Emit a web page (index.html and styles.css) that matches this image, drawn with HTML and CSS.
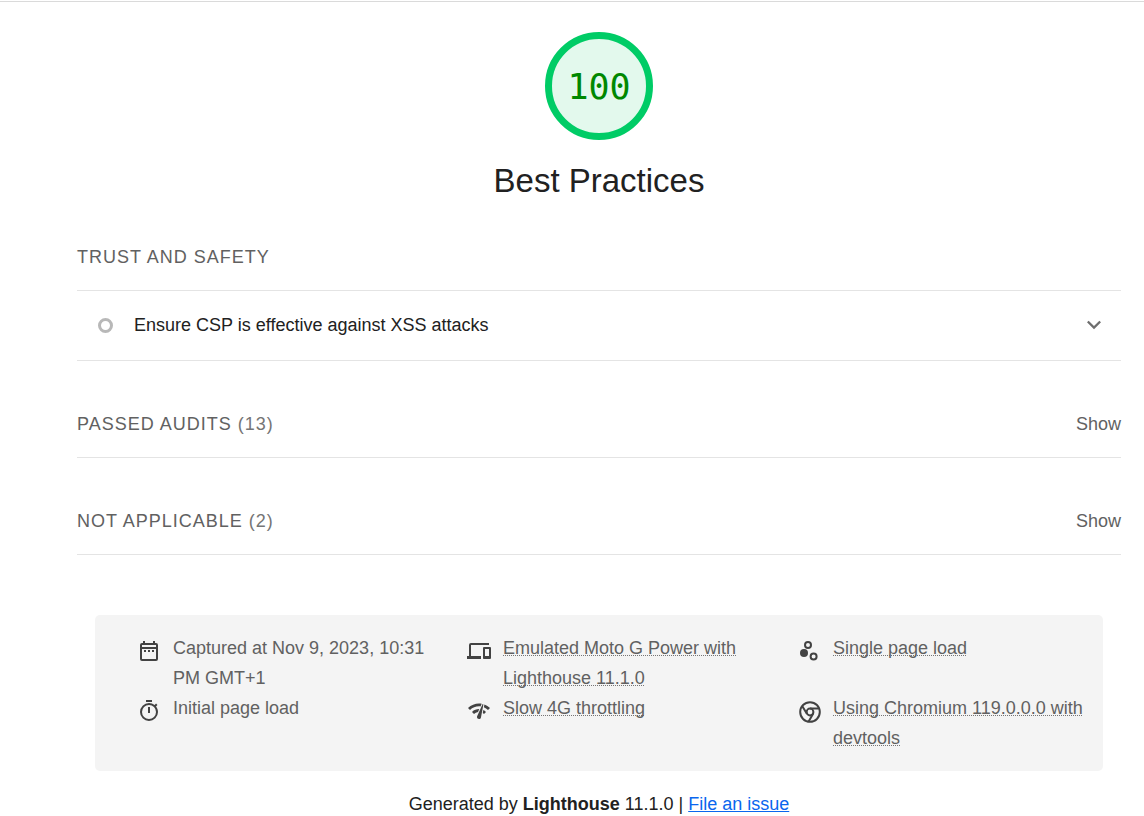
FILE: index.html
```html
<!DOCTYPE html>
<html lang="en">
<head>
<meta charset="utf-8">
<meta name="viewport" content="width=device-width, initial-scale=1">
<title>Lighthouse Report</title>
<link rel="stylesheet" href="styles.css">
</head>
<body>
<main class="report">
  <header class="category">
    <div class="gauge">100</div>
    <h1 class="category-title">Best Practices</h1>
  </header>

  <section class="group">
    <h2 class="group-head">Trust and Safety</h2>
    <details class="audit">
      <summary class="audit-row">
        <span class="audit-mark"></span>
        <span class="audit-title">Ensure CSP is effective against XSS attacks</span>
        <svg class="chevron" viewBox="0 0 24 24" aria-hidden="true"><path d="M7.41 8.29 12 12.87l4.59-4.58L18 9.7l-6 6-6-6z"/></svg>
      </summary>
    </details>
  </section>

  <details class="group">
    <summary class="group-head">
      <span>Passed audits <span class="count">(13)</span></span>
      <span class="toggle">Show</span>
    </summary>
  </details>

  <details class="group">
    <summary class="group-head">
      <span>Not applicable <span class="count">(2)</span></span>
      <span class="toggle">Show</span>
    </summary>
  </details>

  <footer>
    <ul class="meta">
      <li class="meta-item">
        <svg class="icon" viewBox="0 0 24 24" aria-hidden="true"><path d="M19 4h-1V2h-2v2H8V2H6v2H5a2 2 0 0 0-2 2v14a2 2 0 0 0 2 2h14a2 2 0 0 0 2-2V6a2 2 0 0 0-2-2zm0 16H5V10h14v10zm0-12H5V6h14v2zM7 11h2v2H7zm4 0h2v2h-2zm4 0h2v2h-2z"/></svg>
        <span>Captured at Nov 9, 2023, 10:31 PM GMT+1</span>
      </li>
      <li class="meta-item">
        <svg class="icon" viewBox="0 0 24 24" aria-hidden="true"><path d="M4 6h18V4H4a2 2 0 0 0-2 2v11H0v3h14v-3H4V6zm19 2h-6a1 1 0 0 0-1 1v10c0 .55.45 1 1 1h6a1 1 0 0 0 1-1V9a1 1 0 0 0-1-1zm-1 9h-4v-7h4v7z"/></svg>
        <span class="dotted">Emulated Moto G Power with Lighthouse 11.1.0</span>
      </li>
      <li class="meta-item">
        <svg class="icon" viewBox="0 0 24 24" aria-hidden="true"><circle cx="7" cy="14" r="4"/><g class="stroked"><circle cx="11" cy="6" r="3"/><circle cx="16.6" cy="17.6" r="3"/></g></svg>
        <span class="dotted">Single page load</span>
      </li>
      <li class="meta-item">
        <svg class="icon" viewBox="0 0 24 24" aria-hidden="true"><path d="M15 1H9v2h6V1zm-4 13h2V8h-2v6zm8.03-6.61 1.42-1.42c-.43-.51-.9-.99-1.41-1.41l-1.42 1.42A8.96 8.96 0 0 0 12 4a9 9 0 1 0 9 9c0-2.12-.74-4.07-1.97-5.61zM12 20a7 7 0 1 1 0-14 7 7 0 0 1 0 14z"/></svg>
        <span>Initial page load</span>
      </li>
      <li class="meta-item">
        <svg class="icon" viewBox="0 0 24 24" aria-hidden="true"><path d="M15.9 5c-.17 0-.32.09-.41.23l-.07.15-5.18 11.65c-.16.29-.26.61-.26.96 0 1.11.9 2.01 2.01 2.01.96 0 1.77-.68 1.96-1.59l.01-.03L16.4 5.5c0-.28-.22-.5-.5-.5zM1 9l2 2c2.88-2.88 6.79-4.08 10.53-3.62l1.19-2.68C9.89 3.84 4.74 5.27 1 9zm20 2 2-2c-1.64-1.64-3.55-2.82-5.59-3.57l-.53 2.82c1.5.62 2.9 1.53 4.12 2.75zm-4 4 2-2c-.8-.8-1.7-1.42-2.66-1.89l-.55 2.92c.42.27.83.59 1.21.97zM5 13l2 2a7.1 7.1 0 0 1 4.03-2l1.28-2.88c-2.63-.08-5.3.87-7.31 2.88z"/></svg>
        <span class="dotted">Slow 4G throttling</span>
      </li>
      <li class="meta-item">
        <svg class="icon" viewBox="0 0 24 24" aria-hidden="true"><g class="stroked"><circle cx="13" cy="13" r="9.8"/><circle cx="13" cy="13" r="3.4"/><path d="M13 9.4h9M9.9 14.8 5 6.8M16.1 14.8l-4.6 8"/></g></svg>
        <span class="dotted">Using Chromium 119.0.0.0 with devtools</span>
      </li>
    </ul>
    <p class="generated">Generated by <b>Lighthouse</b> 11.1.0 | <a href="#issue">File an issue</a></p>
  </footer>
</main>
</body>
</html>
```

FILE: styles.css
```css
* { box-sizing: border-box; }

body {
  margin: 0;
  padding-top: 1px;
  background: #fff;
  color: #212121;
  font: 18px/30px "Liberation Sans", Arial, sans-serif;
}

.report {
  padding: 30px 23px 0 77px;
  border-top: 1px solid #dadada;
}

.category {
  display: flex;
  flex-direction: column;
  align-items: center;
  gap: 21px;
}

.gauge {
  display: grid;
  place-items: center;
  width: 108px;
  height: 108px;
  padding-top: 2px;
  border: 7px solid #00cc66;
  border-radius: 50%;
  background: #e3f9ed;
  color: #008800;
  font: 35px/40px "DejaVu Sans Mono", monospace;
}

.category-title {
  margin: 0;
  font-size: 33px;
  line-height: 40px;
  font-weight: 400;
}

.group { margin-top: 42px; }

.category + .group { margin-top: 35px; }

.group-head {
  display: flex;
  justify-content: space-between;
  align-items: center;
  margin: 0;
  padding: 6px 0 18px;
  border-bottom: 1px solid #e4e4e4;
  color: #616161;
  font-size: 18px;
  font-weight: 400;
  letter-spacing: 1px;
  text-transform: uppercase;
  list-style: none;
}

.count { color: #757575; }

.toggle {
  letter-spacing: normal;
  text-transform: none;
}

.audit-row {
  display: flex;
  align-items: center;
  padding: 19px 13px 20px 21px;
  border-bottom: 1px solid #e4e4e4;
  list-style: none;
}

.audit-mark {
  width: 15px;
  height: 15px;
  border: 3px solid #b8b8b8;
  border-radius: 50%;
}

.audit-title {
  flex: 1;
  margin-left: 21px;
}

.chevron {
  width: 28px;
  height: 28px;
  fill: #6e6e6e;
}

.meta {
  display: grid;
  grid-template-columns: repeat(3, 1fr);
  column-gap: 40px;
  margin: 60px 18px 0;
  padding: 18px 16px 18px 42px;
  border-radius: 5px;
  background: #f4f4f4;
  color: #616161;
  list-style: none;
}

.meta-item {
  display: flex;
  align-items: flex-start;
  gap: 12px;
}

.icon {
  flex: none;
  width: 24px;
  height: 24px;
  margin-top: 6px;
  fill: #424242;
}

.stroked {
  fill: none;
  stroke: #424242;
  stroke-width: 2;
}

.dotted {
  text-decoration: underline dotted #757575 1px;
  text-underline-offset: 1px;
  text-decoration-skip-ink: none;
}

.generated {
  margin: 18px 0 0;
  text-align: center;
}

.generated a { color: #0a66ee; }
```
